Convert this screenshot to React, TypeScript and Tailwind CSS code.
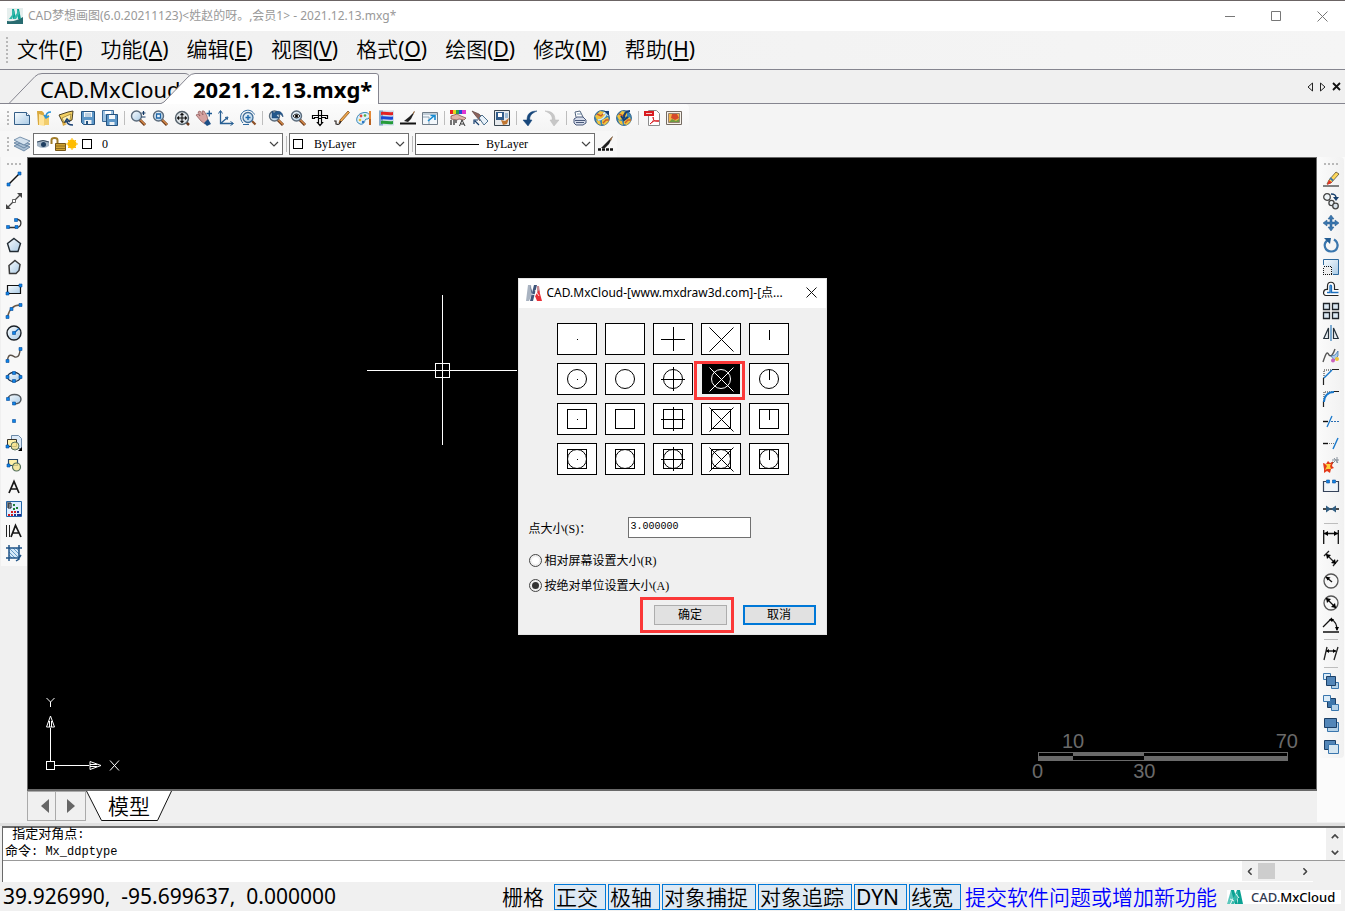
import React, { useState } from "react";
import type { ReactNode } from "react";

type Tool = { name: string; art: ReactNode } | "sep";

const UI = "font-['Noto_Sans','Noto_Sans_CJK_SC',sans-serif]";
const SONG = "font-['Liberation_Mono','Noto_Sans_CJK_SC',monospace]";

const N = "#1c3f66";
const S = "#3a76ad";
const L = "#b5d2e8";

function Node({ x, y }: { x: number; y: number }) {
  return <path d={`M${x - 1.5} ${y - 1.5}h3v3h-3z`} fill="#0f83e6" stroke="#0a4f9c" strokeWidth=".6" />;
}

function Lens({ r = 5, children }: { r?: number; children?: ReactNode }) {
  return (
    <>
      <path d="M9.5 9.5l5.5 5.5" stroke="#6b3a1c" strokeWidth="3" />
      <path d="M10 9.5l5 5" stroke="#d98c4a" strokeWidth="1.2" />
      <circle cx="6.5" cy="6" r={r} fill="url(#glass)" stroke="#5b6b7b" strokeWidth="1.4" />
      {children}
    </>
  );
}

function Globe({ children }: { children: ReactNode }) {
  return (
    <>
      <circle cx="8" cy="8" r="7.5" fill="#3c86b4" stroke="#2a5c84" strokeWidth=".8" />
      <path d="M1 6l5-5 5 1 0 4-4 3-4 1zM8 10l6-3 1 4-4 4-3-1zM2 10l4 1 1 4-3-1z" fill="#f0c33c" />
      <path d="M3 4l4 2 3-3M9 13l3-3 3 0" fill="none" stroke="#c85a2e" strokeWidth="1.400" />
      {children}
    </>
  );
}

const topTools: Tool[] = [
  { name: "新建", art: <><path d="M.5 2.5h12l3 3v9H.5z" fill="url(#glass)" stroke="#355f88" /><path d="M12.5 2.5v3h3" fill="#fff" stroke="#355f88" /></> },
  { name: "打开", art: <><path d="M1 1h5l2 2v12H2z" fill="#d9a93f" /><path d="M3 4l6 2v10l-6-1z" fill="#ffe49a" /><path d="M8 5h5v10H8z" fill="#f1cc6c" /><path d="M15 2c-4 0-5 2-5 5M8 5l2 3 3-2" fill="none" stroke="#2a93d6" strokeWidth="1.6" /></> },
  { name: "打开云图", art: <><path d="M1 5l9-3 5-1-1 9-9 3z" fill="#f3d063" stroke="#4d4020" /><path d="M4 8l9-4-1 6-6 2z" fill="#fff0b2" stroke="#8f7427" strokeWidth=".7" /><path d="M15 15c-4 0-6-1-6-4M7 12l2-3 3 3" fill="none" stroke="#1b4275" strokeWidth="1.600" /><path d="M4 12l1 4 4-2" fill="#d9a93f" /></> },
  { name: "保存", art: <><path d="M1.500 1.500h13v13h-11l-2-2z" fill="#5c96c7" stroke="#24527f" /><path d="M4 2h8v5H4z" fill="#f4f8fb" /><path d="M5 4h6M5 6h6" stroke="#83a7c5" /><path d="M4.500 10h7v4h-7z" fill="#eef2f5" /><path d="M6 11h2v3H6z" fill="#24527f" /></> },
  { name: "另存为", art: <><path d="M.5.5h11v11H.5z" fill="#9fc3e1" stroke="#3a6b99" /><path d="M3 1h6v3H3z" fill="#fff" /><path d="M4.500 4.500h11v11h-11z" fill="#5c96c7" stroke="#24527f" /><path d="M7 5h6v4H7z" fill="#f4f8fb" /><path d="M7.500 12h5v3h-5z" fill="#eef2f5" /></> },
  "sep",
  { name: "缩放", art: <><Lens /><path d="M11.500 3h4M13.500 1v4M11.500 7h4" stroke="#143a66" strokeWidth="1.2" /></> },
  { name: "窗口缩放", art: <Lens><path d="M4.500 4h4v4h-4z" fill="#e8f3fb" stroke="#1e66a8" strokeWidth="1.3" /></Lens> },
  { name: "范围缩放", art: <><path d="M12 12l3 3" stroke="#6b3a1c" strokeWidth="2.500" /><circle cx="8" cy="8" r="6.500" fill="#dce2e5" stroke="#53606a" strokeWidth="1.400" /><path d="M3.500 8h9M8 3.500v9M5 6.500L3.500 8 5 9.500M11 6.500L12.500 8 11 9.500M6.500 5L8 3.500 9.500 5M6.500 11L8 12.500 9.500 11" fill="none" stroke="#111" strokeWidth="1.100" /></> },
  { name: "平移", art: <><path d="M0 5l2-1 2 2-2-4 2-1 3 4-1-4 2 0 3 5 1 5-3 3-4-3z" fill="#d5a2a0" stroke="#8c5656" strokeWidth=".7" /><path d="M8 13l4-4 3 5-4 2z" fill="#1d4f86" /><path d="M10.500 3.500h5.500M13.300 .5v6" stroke="#1d5a92" strokeWidth="1.300" /></> },
  { name: "坐标系", art: <><path d="M2.500 1v12.500H15M2.500 13.500l7-6" fill="none" stroke="#285f93" strokeWidth="1.300" /><path d="M.5 3.500L2.500.5l2 3M12.500 11.500l3 2-3 2M7 7.500l3-.5-1 3" fill="none" stroke="#285f93" /></> },
  { name: "动态缩放", art: <><path d="M12 11l3.500 3.500" stroke="#8c4f26" strokeWidth="2.200" /><circle cx="8" cy="7.500" r="5" fill="url(#glass)" stroke="#3f6d98" strokeWidth="1.300" /><path d="M5.500 7.500h5M8 5v5" stroke="#1d68ab" strokeWidth="1.400" /><path d="M3 13C-1 9 0 2 6 .5c4-1 7 1 8.500 4M3 14.500h6" fill="none" stroke="#2b679f" /></> },
  "sep",
  { name: "上一视图", art: <><Lens /><path d="M15 7C15 1 9 0 6 3L4 1v7h7L8.500 5.500C11 3 13 4 15 7z" fill="#24588c" stroke="#173f6c" strokeWidth=".5" /></> },
  { name: "查看", art: <Lens><path d="M3 6q3.500-4 7 0-3.500 4-7 0z" fill="#fff" stroke="#222" /><circle cx="6.500" cy="6" r="1.500" /></Lens> },
  { name: "平移工具", art: <path d="M6.500.5h3v5h6v3h-2v-1h-4v5h1l-2.500 3-2.500-3h1v-5h-4v1h-2v-3h6zM6.500 5.500h3v3h-3z" fill="#fff" stroke="#000" strokeWidth="1.200" /> },
  { name: "铅笔", art: <><path d="M5 13l1-3 8-9 1.500 1.500-8 9z" fill="#f0a74a" stroke="#84501f" strokeWidth=".8" /><path d="M0 11h2v3c3 1 4 0 5-3" fill="none" stroke="#2c2522" strokeWidth="1.200" /></> },
  { name: "颜色", art: <><path d="M6 3c6-2 9 2 7 5-1 2-3 0-4 2 0 2-2 5-5 4-6-2-3-10 2-11z" fill="#dff1fb" stroke="#3687b6" /><circle cx="5" cy="6" r="1.400" fill="#e44a42" /><circle cx="9" cy="5.500" r="1.300" fill="#58a83e" /><circle cx="4" cy="10" r="1.300" fill="#eebd2d" /><circle cx="7" cy="12" r="1.200" fill="#2873c6" /><path d="M14 1v8" stroke="#e38937" strokeWidth="2" /><path d="M13 9h2v6h-2z" fill="#b96223" /></> },
  { name: "图层颜色", art: <><path d="M1 .5h15v15H1z" fill="#cfdeea" /><path d="M1 .5h4v15H1z" fill="#86aacb" /><path d="M3 2c4-1 8 1 12 0v3C11 6 7 4 3 5z" fill="#e32222" /><path d="M3 6.500c4-1 8 1 12 0v3c-4 1-8-1-12 0z" fill="#1a49d7" /><path d="M3 11c4-1 8 1 12 0v3c-4 1-8-1-12 0z" fill="#269c3a" /></> },
  { name: "线型", art: <><path d="M0 13.500h16" stroke="#111" strokeWidth="2" /><path d="M4 11l5-4 6-6-4 8-3 3z" fill="#202020" /><path d="M13 2l2-1-2 4z" fill="#a4764b" /></> },
  { name: "全屏", art: <><path d="M.5 2.500h15v12H.5z" fill="#f2f7fb" stroke="#6f7c88" /><path d="M1 4h14M1 7h6v7" fill="none" stroke="#91a4b4" /><path d="M6 11l6-5M8.500 5.500H13V10" fill="none" stroke="#188bd0" strokeWidth="1.600" /></> },
  "sep",
  { name: "颜色选择", art: <><path d="M0 0h3v4H0z" fill="#e72229" /><path d="M3 0h3v4H3z" fill="#e7d420" /><path d="M6 0h3v4H6z" fill="#29a64c" /><path d="M9 0h3v4H9z" fill="#284fd6" /><path d="M12 0h4v4h-4z" fill="#df35d1" /><path d="M1 6l6-2 4 2 5 2-2 2-5-1-2 1-6-1z" fill="#e0b4aa" stroke="#71463f" strokeWidth=".7" /><path d="M1 10v5M4 10v5M6 10v3" stroke="#555" strokeWidth="1.600" /><path d="M9.500 16l2.500-6 3 6M11 14h3" fill="none" stroke="#333" /></> },
  { name: "特性匹配", art: <><path d="M0 1l7 3 4 4-3 3-5-6z" fill="#8d635c" stroke="#4b3532" strokeWidth=".6" /><path d="M7 8l3-3 6 6-4 4z" fill="#e8f1f9" stroke="#4d718e" /><path d="M2 14v-4h4M3 11l4 4" fill="none" stroke="#173f6e" strokeWidth="1.200" /></> },
  { name: "图纸", art: <><path d="M.5.5h15v15H.5z" fill="#e7eaed" stroke="#3a4650" /><path d="M2 2h8v8H2z" fill="#325d8b" /><path d="M4 3h4v4H4z" fill="#fff" /><path d="M11 3h3v5h-3z" fill="#9fbdd6" /><path d="M7 10l4 1 4-3-2 6-4 1z" fill="#bf7631" /></> },
  "sep",
  { name: "撤销", art: <path d="M15 1C8 1 5 4 5 10H1l5 6 4-6H8c-1-4 2-7 7-9z" fill="#17477b" stroke="#17477b" strokeWidth=".5" /> },
  { name: "重做", art: <path d="M1 1c7 0 10 3 10 9h4l-5 6-4-6h2c1-4-2-7-7-9z" fill="#c7c7c7" stroke="#b8b8b8" strokeWidth=".5" /> },
  "sep",
  { name: "打印", art: <><path d="M4 7L3 2l5-1 3 6" fill="#fff" stroke="#52657f" /><path d="M2 9l3-2h6l3 3v3l-3 2H4l-2-2z" fill="#d6dcea" stroke="#49597a" /><path d="M3 10.500h10M4 12.500h8" stroke="#49597a" /><path d="M5 4h4" stroke="#7895b1" /></> },
  { name: "发布", art: <Globe><path d="M9 4l5-3v5M4 10c5 0 7-3 9-7" fill="none" stroke="#d6eefa" strokeWidth="1.600" /><path d="M10 1l5 0 0 5z" fill="#153e75" /></Globe> },
  { name: "下载", art: <Globe><path d="M14 1c-4 0-6 3-6 7M5 6l3 4 4-3" fill="none" stroke="#153e75" strokeWidth="2" /></Globe> },
  "sep",
  { name: "输出PDF", art: <><path d="M4.500 .5h8l3 3v12h-11z" fill="#fff" stroke="#8c8c8c" /><path d="M0 1h10v5H0z" fill="#d91b20" /><path d="M2 3.500h6" stroke="#f6c9ca" /><path d="M6 14c4-3 4-5 3-7 0 4 3 5 6 4-3-1-6 0-9 3z" fill="none" stroke="#d91b20" /></> },
  { name: "输出图片", art: <><path d="M.5 1.500h15v13H.5z" fill="#f7f2ea" stroke="#746b62" /><path d="M2.500 3.500h11v9h-11z" fill="#f4b246" stroke="#958170" /><path d="M6 4h5l2 4-4 2-4-2z" fill="#d64a2b" /><path d="M3 12l3-3 4 2 3-2v3z" fill="#6e9c42" /></> },
];

const leftTools: Tool[] = [
  { name: "直线", art: <><path d="M2.500 13.500l11-11" stroke="#111" strokeWidth="1.400" /><Node x={2.500} y={13.500} /><Node x={13.500} y={2.500} /></> },
  { name: "构造线", art: <><path d="M1 15L15 1" stroke="#444" strokeWidth="1.200" /><path d="M0 16v-5l5 5zM16 0v5l-5-5z" fill="#444" /><path d="M6.500 6.500h3v3h-3z" fill="#fff" stroke="#444" strokeWidth=".8" /></> },
  { name: "多段线", art: <><path d="M2 12.500h9M11 4.500h1c4 1 4 7-1 8" fill="none" stroke="#333" strokeWidth="1.300" /><Node x={2} y={12} /><Node x={10.500} y={12} /><Node x={10} y={5} /></> },
  { name: "多边形", art: <path d="M8 1.500l6.500 5-2.500 8H4l-2.500-8z" fill="url(#glass)" stroke="#222b33" strokeWidth="1.400" /> },
  { name: "不规则多边形", art: <path d="M9 1.500l5 4-1 6-3 3H3.500l-.5-8z" fill="url(#glass)" stroke="#3a3a3a" strokeWidth="1.500" /> },
  { name: "矩形", art: <><path d="M1.500 4.500h13v8h-13z" fill="url(#glass)" stroke="#111" strokeWidth="1.200" /><Node x={1.500} y={12.500} /><Node x={14.500} y={4.500} /></> },
  { name: "圆弧", art: <><path d="M1.500 14C3 7 7 2 14 2" fill="none" stroke="#6b5a48" strokeWidth="1.400" /><Node x={1.500} y={14} /><Node x={5.500} y={6} /><Node x={14.500} y={2} /></> },
  { name: "圆", art: <><circle cx="8" cy="8" r="7" fill="url(#glass)" stroke="#1b2026" strokeWidth="1.400" /><path d="M8 8l5-4.500" stroke="#0f62b5" strokeWidth="1.300" /><Node x={8} y={8} /></> },
  { name: "样条曲线", art: <><path d="M1.500 14C2 5 7 9 9 10c4 1 5-4 5-8" fill="none" stroke="#5a5148" strokeWidth="1.400" /><Node x={1.500} y={14} /><Node x={14.500} y={2} /></> },
  { name: "椭圆", art: <><ellipse cx="8" cy="8" rx="6.500" ry="4.500" fill="url(#glass)" stroke="#23374d" strokeWidth="1.300" /><Node x={1.500} y={8} /><Node x={14.500} y={8} /><Node x={8} y={4} /><Node x={8} y={12} /></> },
  { name: "椭圆弧", art: <><path d="M2 8c0-6 13-6 13 0 0 4-4 5-7 5" fill="url(#glass)" stroke="#54595e" strokeWidth="1.400" /><Node x={2} y={8} /><Node x={8} y={12.500} /></> },
  { name: "点", art: <Node x={8} y={8} /> },
  { name: "插入块", art: <><path d="M5.500.5h7l3 3v10h-10z" fill="#dceaf8" stroke="#6b89a8" /><path d="M1.500 4.500h9v7h-9z" fill="#fff1a8" stroke="#38332b" /><circle cx="9" cy="11" r="4" fill="#f4e28c" fillOpacity=".8" stroke="#55725e" /><Node x={1.500} y={11.500} /><path d="M16 12v4h-4z" /></> },
  { name: "创建块", art: <><path d="M2.500 2.500h9v6h-9z" fill="#fff1a8" stroke="#254568" strokeWidth="1.200" /><circle cx="10.500" cy="10" r="4" fill="#f4e28c" fillOpacity=".8" stroke="#55725e" strokeWidth="1.200" /><Node x={2.500} y={8.500} /></> },
  { name: "单行文字", art: <path d="M3 14L8 2.500 13 14M5 10h6" fill="none" stroke="#171717" strokeWidth="1.700" /> },
  { name: "填充", art: <><path d="M.5.500h15v15H.5z" fill="#dfeeff" stroke="#2466a8" /><path d="M2 1v6h3V2H3v4" fill="none" stroke="#111" /><path d="M7 3h2v2H7zM7 7h2v2H7zM10 6h2v2h-2z" fill="#1d7f35" /><path d="M5 10h2v2H5zM2 13h2v2H2zM5 13h2v2H5zM8 10h2v2H8z" fill="#cf1d24" /><path d="M11 10h2v2h-2zM8 13h2v2H8zM11 13h2v2h-2zM13 13h2v2h-2z" fill="#1b2d91" /></> },
  { name: "多行文字", art: <><path d="M.5 2v12M3.500 2v12" stroke="#222" /><path d="M5 14l4.500-11.500L15 14M6.500 10H13" fill="none" stroke="#171717" strokeWidth="1.700" /></> },
  { name: "图案填充", art: <><path d="M3 3h10v10H3z" fill="#d5e8f8" /><path d="M3 3l10 10M3 7l6 6M7 3l6 6M3 10l3 3M10 3l3 3" stroke="#4a86b9" strokeWidth=".8" /><path d="M3 0v16M13 0v14l-3 2M0 3h16M0 13h13l2-3" fill="none" stroke="#1f5386" strokeWidth="1.500" /></> },
];

const rightTools: Tool[] = [
  { name: "删除", art: <><path d="M0 15h16" stroke="#333" strokeWidth="1.200" /><path d="M4 13l2-4 7-8 3 2-8 9z" fill="#ffd85b" stroke="#5d5032" strokeWidth=".8" /><path d="M4 14l2-5 3 2.500z" fill="#e63225" /><path d="M7 7l3 2.500" stroke="#3c74ae" strokeWidth="1.800" /></> },
  { name: "复制", art: <><circle cx="4" cy="4" r="3.300" fill="#eef4f8" stroke="#444" strokeWidth="1.300" /><circle cx="8.500" cy="10" r="2.600" fill="#eef4f8" stroke="#444" strokeWidth="1.300" /><circle cx="12.500" cy="13" r="2.800" fill="#d8e2ea" stroke="#444" strokeWidth="1.300" /><path d="M8 1c4 0 5 1 5 4" fill="none" stroke="#173f6c" strokeWidth="1.500" /><path d="M10 4h6l-3 4z" fill="#173f6c" /></> },
  { name: "移动", art: <path d="M8 0l3 4H9v3h3V5l4 3-4 3V9H9v3h2l-3 4-3-4h2V9H4v2L0 8l4-3v2h3V4H5z" fill={S} stroke="#265b8e" strokeWidth=".5" /> },
  { name: "旋转", art: <><path d="M5 3C-1 7 2 14 8 14.500c7 0 9-8 3-12" fill="none" stroke={S} strokeWidth="2.200" /><path d="M1 1l7 0-1 6z" fill="#245e94" /></> },
  { name: "缩放对象", art: <><path d="M.500.500h15v15H.500z" fill="url(#glass)" /><path d="M.500 6V.500h15v15H10" fill="none" stroke="#2f699c" /><path d="M.500 7.500h8v8h-8z" fill="#eee" stroke="#111" strokeDasharray="1 1" shapeRendering="crispEdges" /></> },
  { name: "偏移", art: <><path d="M15.500 8.500h-4V5c0-5-7-5-7 0v3.500C-.5 8-.5 14.500 3 14.500h12.500" fill="#fff" stroke="#252525" strokeWidth="1.200" /><path d="M15.500 11.500H8.500V5c0-1.300-1.500-1.300-1.500 0v6.500H4" fill="none" stroke="#1d70be" strokeWidth="1.300" /></> },
  { name: "阵列", art: <path d="M.500.500h6v6h-6zM9.500.500h6v6h-6zM.500 9.500h6v6h-6zM9.500 9.500h6v6h-6z" fill="#dbe8f3" stroke="#20252b" strokeWidth="1.300" /> },
  { name: "镜像", art: <><path d="M5.500 3v10.500H.800zM10.500 3v10.500h4.700z" fill="#eaf0f4" stroke="#26323c" strokeWidth="1.200" /><path d="M8 0v16" stroke="#2e7ab9" strokeWidth="1.200" /></> },
  { name: "编辑样条", art: <><path d="M0 15c3-9 4-11 6-7 2 2 4 0 6-6" fill="none" stroke="#555" strokeWidth="1.400" /><path d="M8 9l4-1 3-4v5l-4 4z" fill="#a8cbed" stroke="#376aa0" strokeWidth=".7" /><circle cx="10" cy="13.500" r="2" fill="#ca62bd" /><circle cx="14" cy="12" r="2" fill="#efc33d" /></> },
  { name: "倒角", art: <><path d="M1 9V1h8" fill="none" stroke="#222" strokeDasharray="1 1" /><path d="M.5 16V9M9 .5h7" stroke="#222" strokeWidth="1.200" /><path d="M1 9l8-8" stroke="#1978cb" strokeWidth="1.500" /></> },
  { name: "圆角", art: <><path d="M1 10V1h9" fill="none" stroke="#222" strokeDasharray="1 1" /><path d="M.5 16v-6M10 .5h6" stroke="#222" strokeWidth="1.200" /><path d="M1 11C1 5 5 1 11 1" fill="none" stroke="#1978cb" strokeWidth="1.800" /></> },
  { name: "修剪", art: <><path d="M0 8.500h5" stroke="#111" strokeWidth="1.400" /><path d="M8 8.500h8" stroke="#2a6eb2" strokeWidth="1.200" strokeDasharray="2 1" /><path d="M4 14L9 3" stroke="#1978cb" strokeWidth="1.300" /></> },
  { name: "延伸", art: <><path d="M0 8.500h5" stroke="#111" strokeWidth="1.400" /><path d="M6 8.500h5" stroke="#777" strokeDasharray="1 1" /><path d="M10 14l5-11" stroke="#1978cb" strokeWidth="1.400" /></> },
  { name: "分解", art: <><path d="M8 8l4-4M11 1l4 5M9 3l7 0M14 6V0" stroke="#7b8792" strokeWidth=".9" /><path d="M6 9l4-4" stroke="#7a2c1a" strokeWidth="1.600" /><path d="M0 6l3 1 2-3 2 2 3-1-1 4 2 2-3 1-1 4-3-2-3 2 0-4z" fill="#e33a1c" /><path d="M2 7l2 2-2 4 2-1 4 0-1-3 1-2-3 0z" fill="#ffd13b" /></> },
  { name: "打断", art: <><path d="M3 2.500H.500v10h15v-10H13" fill="#f0f4f8" stroke="#35435a" strokeWidth="1.200" /><Node x={5} y={2.500} /><Node x={11} y={2.500} /></> },
  { name: "合并", art: <><path d="M0 8h16" stroke="#111" strokeWidth="1.500" /><path d="M3 4.500L8 8l-5 3.500zM13 4.500L8 8l5 3.500z" fill="#315d80" /></> },
  "sep",
  { name: "线性标注", art: <><path d="M.700 1v14M15.300 1v14M1 4.500h14" stroke="#111" strokeWidth="1.300" /><path d="M1 4.500L5 2v5zM15 4.500L11 2v5z" /></> },
  { name: "对齐标注", art: <><path d="M1 5l5-5M10 15l5-6M3 3l9 9" stroke="#222" strokeWidth="1.300" /><path d="M3 3l5 1-4 4zM13 13l-5-1 4-4z" /></> },
  { name: "半径标注", art: <><circle cx="8" cy="8" r="7" fill="#f7f7f7" stroke="#555" strokeWidth="1.300" /><path d="M3 4l6 5" stroke="#111" strokeWidth="1.300" /><path d="M2.500 3.500l5 1-3 3z" /></> },
  { name: "直径标注", art: <><circle cx="8" cy="8" r="7" fill="#f7f7f7" stroke="#555" strokeWidth="1.300" /><path d="M3 3l10 10" stroke="#111" strokeWidth="1.300" /><path d="M3 3l5 1-4 4zM13 13l-5-1 4-4z" /></> },
  { name: "角度标注", art: <><path d="M0 15h16M0 10l9-9M8 2c4 2 6 5 6 11" fill="none" stroke="#111" strokeWidth="1.300" /><path d="M6 2l5 0-2 3zM12 10h4l-2 4z" /></> },
  "sep",
  { name: "编辑标注", art: <><path d="M4 2L1 15M15 2l-4 13M3 6h10" stroke="#222" strokeWidth="1.300" /><path d="M3 6l3-2v4zM13 6l-3-2v4z" /></> },
  "sep",
  { name: "前置", art: <><path d="M.500.500h7v6h-7z" fill="#dcecf8" stroke={S} /><path d="M8.500 9.500h7v6h-7z" fill={L} stroke={S} /><path d="M3.500 3.500h9v9h-9z" fill="#5386b8" stroke={N} /></> },
  { name: "后置", art: <><path d="M4.500 3.500h8v9h-8z" fill="#3f76aa" stroke={N} /><path d="M.500.500h7v6h-7z" fill="#dcecf8" stroke={S} /><path d="M8.500 9.500h7v6h-7z" fill={L} stroke={S} /></> },
  { name: "置于对象之上", art: <><path d="M4.500 5.500h11v9h-11z" fill={L} stroke={S} /><path d="M1.500 1.500h12v9h-12z" fill="#5386b8" stroke={N} /></> },
  { name: "置于对象之下", art: <><path d="M1.500 1.500h11v9h-11z" fill="#5386b8" stroke={N} /><path d="M5.500 5.500h10v9h-10z" fill="#d5e6f1" stroke={S} /></> },
];

function ToolButton({ name, art }: { name: string; art: ReactNode }) {
  return (
    <button aria-label={name} className="flex size-[22px] shrink-0 items-center justify-center hover:bg-sky-100">
      <svg viewBox="0 0 16 16" className="size-4 overflow-visible">{art}</svg>
    </button>
  );
}

function Tools({ items, vertical = false }: { items: Tool[]; vertical?: boolean }) {
  return (
    <>
      {items.map((t, i) =>
        t === "sep" ? (
          <span key={i} className={vertical ? "flex h-[6px] items-center" : "flex w-[6px] justify-center"}>
            <span className={vertical ? "h-px w-3.5 bg-[#bdbdbd]" : "h-3.5 w-px bg-[#bdbdbd]"} />
          </span>
        ) : (
          <ToolButton key={i} {...t} />
        ),
      )}
    </>
  );
}

function Grip({ dir, dots = 4 }: { dir: "h" | "v"; dots?: number }) {
  return (
    <span className={dir === "v" ? "flex w-[7px] flex-col items-center gap-0.5" : "flex h-[9px] items-center gap-0.5"}>
      {Array.from({ length: dots }, (_, i) => <span key={i} className="size-0.5 bg-[#b8b8b8]" />)}
    </span>
  );
}

function Chevron({ className, weight = "1.2" }: { className: string; weight?: string }) {
  return (
    <svg viewBox="0 0 10 6" className={className}>
      <path d="M1 1l4 4 4-4" fill="none" stroke="currentColor" strokeWidth={weight} />
    </svg>
  );
}

function Combo({ label, value, width, pad, children }: { label: string; value: string; width: string; pad: string; children: ReactNode }) {
  return (
    <div className={`relative h-[22px] ${width}`}>
      <select aria-label={label} className={`block h-[22px] w-full appearance-none border border-[#707070] bg-white font-['Liberation_Serif',serif] text-xs text-black ${pad}`}>
        <option>{value}</option>
      </select>
      <span className="pointer-events-none absolute inset-y-0 left-1 flex items-center gap-0.5">{children}</span>
      <Chevron className="pointer-events-none absolute top-2 right-1 h-1.5 w-2.5 text-[#444]" />
    </div>
  );
}

const menus: [string, string][] = [["文件", "F"], ["功能", "A"], ["编辑", "E"], ["视图", "V"], ["格式", "O"], ["绘图", "D"], ["修改", "M"], ["帮助", "H"]];

function PointGlyph({ row, col }: { row: number; col: number }) {
  return (
    <svg viewBox="0 0 38 30" className="h-[30px] w-[38px]" fill="none" stroke="currentColor" shapeRendering="crispEdges">
      {(row === 1 || row === 3) && <circle cx="19" cy="15" r="9.500" shapeRendering="auto" />}
      {row >= 2 && <path d="M9.500 5.500h19v19h-19z" />}
      {col === 0 && <path d="M19 15.500h1" />}
      {col === 2 && <path d="M19.500 3v24M7 15.500h24" />}
      {col === 3 && <path d="M7.500 3.500l24 24M31.500 3.500l-24 24" shapeRendering="auto" />}
      {col === 4 && <path d="M19.500 6v10" />}
    </svg>
  );
}

function PointStyleDialog() {
  const [sel, setSel] = useState(8);
  const [mode, setMode] = useState("abs");
  return (
    <section role="dialog" aria-label="点样式" className="absolute inset-x-0 top-[120px] mx-auto w-[309px] border border-[#e4e4e4] bg-[#f0f0f0] pb-[9px] text-black">
      <header className="flex h-[29px] items-center bg-white pb-0.5 pl-[7px]">
        <svg viewBox="0 0 16 16" className="size-4">
          <path d="M2 0h3l1 9-3 7H0z" fill="#a9b3c1" />
          <path d="M8 0h3L7 16H4z" fill="#3f557a" />
          <path d="M4 0l3 9-1 3z" fill="#566b8c" />
          <path d="M11 1h2l1 6-3 4z" fill="#c98b92" />
          <path d="M13 5l3 11h-5l-2-5z" fill="#e92f37" />
          <path d="M5 9l5 1M9 5l4 6" stroke="#fff" strokeWidth=".8" />
        </svg>
        <h2 className={`ml-[5px] flex-1 truncate text-xs ${UI}`}>CAD.MxCloud-[www.mxdraw3d.com]-[点...</h2>
        <button aria-label="关闭" className="flex h-full w-7 items-center justify-center">
          <svg viewBox="0 0 11 11" className="size-[11px]"><path d="M.5.5l10 10M10.500.5l-10 10" stroke="#111" /></svg>
        </button>
      </header>
      <div className="ml-[38px] grid w-fit grid-cols-5 gap-2 pt-[15px]">
        {Array.from({ length: 20 }, (_, i) => (
          <div key={i} className="relative h-8 w-10">
            <button
              aria-label={`点样式 ${i + 1}`}
              aria-pressed={sel === i}
              onClick={() => setSel(i)}
              className={sel === i ? "block size-full border border-[#f0f0f0] bg-black text-white" : "block size-full border border-black bg-white"}
            >
              <PointGlyph row={Math.floor(i / 5)} col={i % 5} />
            </button>
            {i === 8 && <span className="pointer-events-none absolute -inset-x-[7px] -top-0.5 -bottom-[5px] mr-[3px] border-3 border-[#fb3838]" />}
          </div>
        ))}
      </div>
      <div className={`mt-[42px] flex items-center pl-2.5 text-xs ${SONG}`}>
        <label htmlFor="size" className="w-[99px] pt-1">点大小<span className="font-['Liberation_Serif','Noto_Sans_CJK_SC',serif]">(S)：</span></label>
        <input id="size" defaultValue="3.000000" className="h-[21px] w-[123px] border border-[#707070] bg-white px-0.5 pb-0.5 text-[10px] outline-none" />
      </div>
      <fieldset className={`mt-[13px] flex flex-col gap-[7px] pl-2.5 text-xs ${SONG}`}>
        {[["rel", "相对屏幕设置大小", "(R)"], ["abs", "按绝对单位设置大小", "(A)"]].map(([id, text, key]) => (
          <label key={id} className="flex h-[18px] items-center gap-[3px] whitespace-nowrap">
            <input
              type="radio"
              name="mode"
              checked={mode === id}
              onChange={() => setMode(id)}
              className="size-[13px] appearance-none rounded-full border border-[#444] bg-white bg-clip-content p-0.5 checked:bg-[#333]"
            />
            <span className="pt-0.5">{text}<span className="font-['Liberation_Serif',serif]">{key}</span></span>
          </label>
        ))}
      </fieldset>
      <div className="mt-[11px] flex justify-end gap-4 pr-2.5 text-xs font-['Noto_Sans_CJK_SC',sans-serif]">
        <div className="relative">
          <button className="flex h-5 w-[73px] items-center justify-center border border-[#adadad] bg-[#e1e1e1] pb-0.5">确定</button>
          <span className="pointer-events-none absolute -top-2 -right-[7px] -bottom-2 -left-3.5 border-3 border-[#fb3838]" />
        </div>
        <button className="flex h-5 w-[73px] items-center justify-center border-2 border-[#0078d7] bg-[#e1e1e1] pb-0.5">取消</button>
      </div>
    </section>
  );
}

function Drawing() {
  return (
    <main className="relative min-h-[520px] flex-1 overflow-hidden border-t border-r border-b-2 border-l border-[#696969] bg-black">
      <svg viewBox="0 0 150 150" className="absolute top-[137px] left-[339px] size-[150px]" stroke="#fff" fill="none" shapeRendering="crispEdges">
        <path d="M75.500 0v150M0 75.500h150M68.500 68.500h14v14h-14z" />
      </svg>
      <svg viewBox="0 0 76 76" className="absolute bottom-[15px] left-[17px] size-[76px]" stroke="#fff" fill="none">
        <path d="M1.500 63.500h8v8h-8zM5.500 63V30M10 67.500h34" shapeRendering="crispEdges" />
        <path d="M5.500 18l-4 11h8zM4.500 23v6M6.500 23v6M56 67.500l-11-4v8zM45 66.500h7M45 68.500h7M.5 -1l5 5 5-5M5.500 4v5M65 62.500l9 10M74 62.500l-9 10" />
      </svg>
      <div className="absolute right-[18px] bottom-2 w-[262px] font-['Liberation_Sans',sans-serif] text-xl leading-5 text-[#6a6a6a]">
        <div className="flex justify-between pl-[26px]"><span>10</span><span>70</span></div>
        <svg viewBox="0 0 250 9" className="mt-px ml-[2px] block h-[9px] w-[250px]" shapeRendering="crispEdges">
          <path d="M0 0h250v9H0z" fill="#6a6a6a" />
          <path d="M1 1h34v3H1zM106 1h143v3H106zM35 4h71v4H35z" fill="#000" />
        </svg>
        <div className="flex gap-[90px]"><span className="-ml-1">0</span><span>30</span></div>
      </div>
      <PointStyleDialog />
    </main>
  );
}

function Logo({ className }: { className: string }) {
  return (
    <svg viewBox="0 0 16 14" className={className}>
      <path d="M4 0h3l-1 8-3 6H0z" fill="#5cc7bc" />
      <path d="M4 0l4 14h3L7 0z" fill="#0ba293" />
      <path d="M10 0h3l3 14h-5z" fill="#0ba293" />
      <path d="M10 0l1 7-4 7H4z" fill="#35b8aa" />
      <path d="M3 9l4 2M9 4l3 4" stroke="#fff" strokeWidth=".9" fill="none" />
    </svg>
  );
}

const statusItems: [string, boolean][] = [["栅格", false], ["正交", true], ["极轴", true], ["对象捕捉", true], ["对象追踪", true], ["DYN", true], ["线宽", true]];

export default function App() {
  return (
    <div className={`flex min-h-screen flex-col border-t border-[#6b6464] bg-[#f0f0f0] text-black ${UI}`}>
      <svg className="absolute size-0" aria-hidden="true">
        <defs>
          <linearGradient id="glass" x1="0" y1="0" x2="1" y2="1">
            <stop offset="0" stopColor="#fafdff" />
            <stop offset="1" stopColor="#a9cae5" />
          </linearGradient>
        </defs>
      </svg>

      <header className="flex h-[30px] items-center bg-white pl-[7px]">
        <svg viewBox="0 0 16 16" className="size-4">
          <path d="M0 0h16v16H0z" fill="#e6efee" />
          <path d="M0 13q9 1 16-4v7H0z" fill="#286b70" />
          <path d="M5 1h2l2 10H6zM10 1h2l2 10h-3z" fill="#0ba293" />
          <path d="M5 1l0 6-3 4h3L8 4zM10 1l0 4-4 6h3l4-6z" fill="#35b8aa" />
        </svg>
        <h1 className="ml-[5px] flex-1 text-xs text-[#999]">CAD梦想画图(6.0.20211123)&lt;姓赵的呀。,会员1&gt; - 2021.12.13.mxg*</h1>
        <div className="flex h-full">
          {[["最小化", "M0 5.500h10"], ["最大化", "M.5.5h9v9h-9z"], ["关闭", "M.5.5l10 10M10.500.5l-10 10"]].map(([name, d]) => (
            <button key={name} aria-label={name} className="flex h-full w-[46px] items-center justify-center">
              <svg viewBox="0 0 11 11" className="size-[11px]"><path d={d} fill="none" stroke="#777" /></svg>
            </button>
          ))}
        </div>
      </header>

      <nav className="flex h-[39px] items-center border-b border-[#85858f] bg-gradient-to-r from-[#f0f0f0] to-[#f5f5f5] pl-[3px]">
        <Grip dir="v" dots={7} />
        <div className="ml-[7px] flex gap-[18px] text-[21px]">
          {menus.map(([t, k]) => (
            <button key={k} className="whitespace-nowrap"><span className="font-[350]">{t}</span>(<u className="underline-offset-2">{k}</u>)</button>
          ))}
        </div>
      </nav>

      <div className="flex h-[34px] items-end justify-between border-b border-[#85858f]">
        <div className="-mb-px flex h-[31px]" role="tablist">
          <button role="tab" className="relative h-[31px] w-[180px] overflow-hidden pl-10 text-left text-[22px] leading-[28px]">
            <svg viewBox="0 0 190 31" className="absolute top-0 left-0 h-[31px] w-[190px]" fill="none" stroke="#85858f">
              <path d="M9 30.500l26-27q3-3 7-3h148" />
            </svg>
            <span className="relative">CAD.MxCloud</span>
          </button>
          <button role="tab" aria-selected="true" className="relative -ml-5 h-[31px] w-[219px] pl-[33px] text-left text-[22px] leading-[28px] font-bold">
            <svg viewBox="0 0 219 31" className="absolute inset-0 h-[31px] w-[219px]" stroke="#85858f">
              <path d="M20 .5h5q3 0 4 2" fill="none" />
              <path d="M0 31l4-2 24-25q3-3.500 7-3.500h181q2.500 0 2.500 2.500v28" fill="#fff" />
            </svg>
            <span className="relative">2021.12.13.mxg*</span>
          </button>
        </div>
        <div className="flex h-full items-center gap-[5px] pr-1">
          <button aria-label="上一个"><svg viewBox="0 0 8 10" className="h-2.5 w-2"><path d="M6.500 1v8L2 5z" fill="none" stroke="#222" /></svg></button>
          <button aria-label="下一个"><svg viewBox="0 0 8 10" className="h-2.5 w-2"><path d="M1.500 1v8L6 5z" fill="none" stroke="#222" /></svg></button>
          <button aria-label="关闭标签"><svg viewBox="0 0 9 9" className="size-[9px]"><path d="M1 1l7 7M8 1L1 8" stroke="#111" strokeWidth="1.800" /></svg></button>
        </div>
      </div>

      <div className="bg-[#f4f4f4]">
        <div className="flex h-[27px] w-fit items-center rounded-r bg-gradient-to-b from-[#fcfcfc] to-[#f4f4f4] pr-1 pl-1">
          <Grip dir="v" />
          <Tools items={topTools} />
        </div>
        <div className="flex h-[26px] w-fit items-center bg-[#f7f7f7] pl-1">
          <Grip dir="v" />
          <ToolButton name="图层" art={<><path d="M0 10l6-3 10 4-6 4zM0 7l6-3 10 4-6 4z" fill="#a9bfd3" stroke="#4d6f91" strokeWidth=".7" /><path d="M0 4l6-3 10 4-6 4z" fill="#d4e2ee" stroke="#4d6f91" strokeWidth=".7" /></>} />
          <Combo label="图层" value="0" width="w-[250px]" pad="pl-[68px]">
            <svg viewBox="0 0 12 8" className="h-2 w-3"><path d="M0 2q6-4 12 0v4q-6 4-12 0z" fill="#a3b4c4" /><path d="M0 2q6-3 12 0" stroke="#34465a" fill="none" /><circle cx="6.500" cy="4.500" r="2.500" fill="#1e3e60" /></svg>
            <svg viewBox="0 0 16 14" className="-mx-px h-3.5 w-4"><path d="M1.500 7V3q0-2 3-2t3 2v4" fill="none" stroke="#a07c29" strokeWidth="2" /><path d="M5.500 6.500h10v7h-10z" fill="#d2a332" stroke="#765719" /><path d="M6 9h9M6 11.500h9" stroke="#8e6e20" /></svg>
            <svg viewBox="0 0 12 12" className="-ml-px size-3"><circle cx="6" cy="6" r="4.500" fill="#ffbd00" /><path d="M6 0v12M0 6h12M2 2l8 8M10 2l-8 8" stroke="#ffbd00" /></svg>
            <span className="ml-0.5 size-2.5 border border-black bg-white" />
          </Combo>
          <span className="mr-0.5 ml-[3px] h-4 w-px bg-[#bbb]" />
          <Combo label="颜色" value="ByLayer" width="w-[120px]" pad="pl-6"><span className="size-2.5 border border-black bg-white" /></Combo>
          <span className="mr-0.5 ml-[3px] h-4 w-px bg-[#bbb]" />
          <Combo label="线型" value="ByLayer" width="w-[180px]" pad="pl-[70px]"><span className="-ml-0.5 h-px w-[62px] bg-black" /></Combo>
          <ToolButton name="线宽" art={<><path d="M0 13.500h16" stroke="#111" strokeWidth="2.500" strokeDasharray="3 1" /><path d="M3 12l5-5 7-7-4 8-4 4z" fill="#202020" /><path d="M12 3l3-3-2 5z" fill="#a4764b" /></>} />
        </div>
      </div>

      <div className="flex flex-1 bg-[#f0f0f0]">
        <aside className="w-[27px] shrink-0 pl-px">
          <div className="flex flex-col items-center bg-[#f8f8f8] pt-0.5 pb-0.5">
            <Grip dir="h" />
            <Tools items={leftTools} vertical />
          </div>
        </aside>
        <div className="flex min-w-0 flex-1 flex-col">
          <Drawing />
          <div className="flex h-[31px] bg-[#f0f0f0]">
            <div className="flex h-[30px] border border-[#aaa]">
              <button aria-label="上一布局" className="flex w-7 items-center justify-center border-r border-[#aaa] pl-1.5"><svg viewBox="0 0 8 14" className="h-3.5 w-2"><path d="M8 0v14L0 7z" fill="#666" /></svg></button>
              <button aria-label="下一布局" className="flex w-[29px] items-center justify-center"><svg viewBox="0 0 8 14" className="h-3.5 w-2"><path d="M0 0v14l8-7z" fill="#666" /></svg></button>
            </div>
            <button className="relative h-[30px] w-[86px] text-[21px] leading-[30px] font-[350]">
              <svg viewBox="0 0 86 30" className="absolute inset-0 h-[30px] w-[86px]"><path d="M.5 0l15 29.500h56L85.500 0" fill="#fff" stroke="#111" /></svg>
              <span className="relative">模型</span>
            </button>
          </div>
        </div>
        <aside className="w-7 shrink-0 bg-[#fbfbfb]">
          <div className="flex w-[27px] flex-col items-center rounded bg-gradient-to-r from-[#fbfbfb] to-[#f1f1f1] pt-0.5">
            <Grip dir="h" />
            <Tools items={rightTools} vertical />
          </div>
        </aside>
      </div>

      <div className="mt-px h-[3px] bg-[#e0e0e0]" />
      <section className={`ml-0.5 border-t-2 border-l border-[#696969] bg-white text-xs ${SONG}`}>
        <div className="flex h-[33px] border-b border-[#999]">
          <div className="flex-1 pl-0.5">
            <p className="flex h-3.5 items-center whitespace-pre"><span> </span><span className="text-[13px] leading-4">指定对角点</span><span>:</span></p>
            <p className="flex h-5 items-center whitespace-pre"><span className="text-[13px] leading-4">命令</span><span>: Mx_ddptype</span></p>
          </div>
          <div className="mr-0.5 flex w-[17px] flex-col items-center justify-around bg-[#f0f0f0] text-[#444]">
            <button aria-label="向上滚动"><Chevron weight="2" className="h-[5px] w-2 rotate-180" /></button>
            <button aria-label="向下滚动"><Chevron weight="2" className="h-[5px] w-2" /></button>
          </div>
        </div>
        <div className="flex h-[21px] bg-[#f0f0f0]">
          <input aria-label="命令输入" className="min-w-0 flex-1 bg-white px-1 outline-none" />
          <div className="mr-8 flex w-[71px] items-center border-b border-white text-[#444]">
            <button aria-label="向左滚动" className="flex w-4 justify-center"><Chevron weight="2" className="h-[5px] w-2 rotate-90" /></button>
            <span className="h-4 w-[17px] bg-[#cdcdcd]" />
            <button aria-label="向右滚动" className="ml-auto flex w-[17px] justify-center"><Chevron weight="2" className="h-[5px] w-2 -rotate-90" /></button>
          </div>
        </div>
      </section>

      <footer className="flex h-[29px] items-center text-[21px]">
        <output className="flex-1 pl-[3px] whitespace-pre">39.926990,  -95.699637,  0.000000</output>
        <div className="flex gap-0.5">
          {statusItems.map(([t, on]) => (
            <button
              key={t}
              aria-pressed={on}
              className={`h-[26px] border pr-[7px] pl-px leading-6 whitespace-nowrap ${t === "DYN" ? "font-normal" : "font-[350]"} ${on ? "border-[#0078d7] bg-[#dde9f4]" : "border-transparent"}`}
            >
              {t}
            </button>
          ))}
        </div>
        <a href="#feedback" className="ml-1 leading-6 font-[350] whitespace-nowrap text-[#0000ff]">提交软件问题或增加新功能</a>
        <div className="mr-1 ml-2.5 flex h-3.5 w-[114px] items-center bg-white">
          <Logo className="h-3.5 w-4 shrink-0" />
          <span className="ml-2 text-[13px] leading-3.5 font-medium text-[#333a50]">CAD.<b className="font-medium text-black">MxCloud</b></span>
        </div>
      </footer>
    </div>
  );
}
